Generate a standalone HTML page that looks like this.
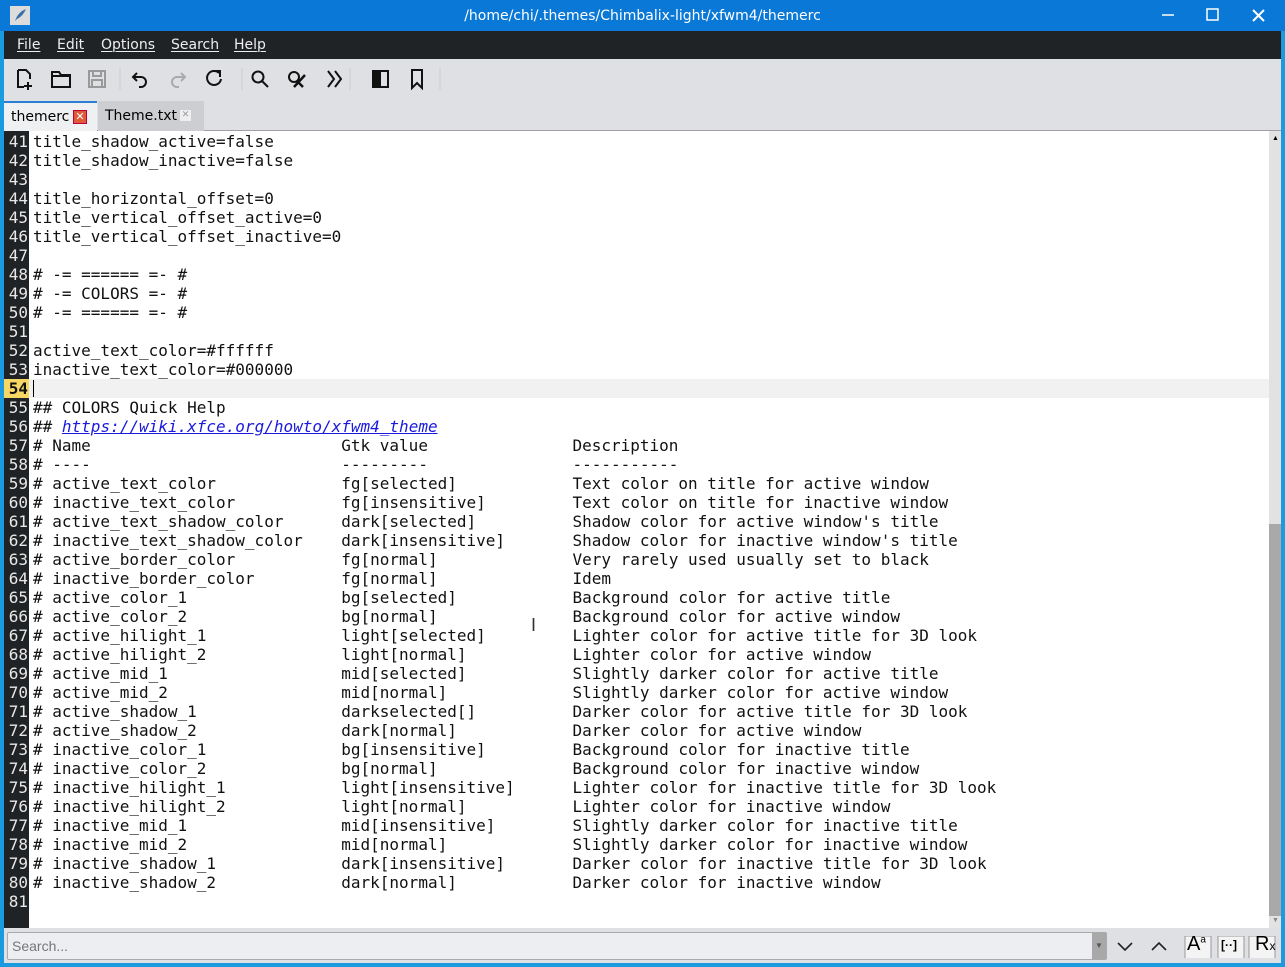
<!DOCTYPE html>
<html><head><meta charset="utf-8"><style>
*{margin:0;padding:0;box-sizing:border-box}
body{width:1285px;height:967px;background:#1a9be0;position:relative;overflow:hidden;font-family:"Liberation Sans","DejaVu Sans",sans-serif}
#title{position:absolute;left:0;top:0;width:1285px;height:31px;background:#0a78d6;color:#fff;font-size:14px;text-align:center;line-height:32px;font-family:"DejaVu Sans",sans-serif}
#menu{position:absolute;left:4px;top:31px;width:1277px;height:28px;background:#202326;color:#eee;font-size:14px;font-family:"DejaVu Sans",sans-serif}
#menu span{position:absolute;top:6px;text-decoration:underline;text-decoration-thickness:1px;text-underline-offset:2px}
#tb{position:absolute;left:4px;top:59px;width:1277px;height:40px;background:#dfe0e3}
#tabs{position:absolute;left:4px;top:99px;width:1277px;height:32px;background:#dfe0e3;border-bottom:1px solid #a0a0a0}
.tab{position:absolute;top:2px;height:30px;font-size:14px;line-height:30px;font-family:"DejaVu Sans",sans-serif}
#ed{position:absolute;left:4px;top:131px;width:1265px;height:797px;background:#fff}
#gut{position:absolute;left:4px;top:131px;width:25px;height:797px;background:#202326}
pre{font-family:"DejaVu Sans Mono",monospace;font-size:16px;line-height:19px}
#nums{position:absolute;left:4px;top:132px;width:24px;color:#e8e8e8;text-align:right}
#code{position:absolute;left:33px;top:132px;color:#111}
#sb{position:absolute;left:1269px;top:131px;width:12px;height:797px;background:#e2e2e2}
#bot{position:absolute;left:4px;top:928px;width:1277px;height:35px;background:#dfe0e3}
</style></head><body>
<div id="title"><svg style="position:absolute;left:10px;top:6px" width="20" height="19"><rect width="20" height="19" fill="#dcdcdc"/><path d="M5 15 Q8 6 16 3 Q13 10 7 13" fill="#3a6ea8"/></svg>/home/chi/.themes/Chimbalix-light/xfwm4/themerc
<svg style="position:absolute;left:1160px;top:8px" width="110" height="16" stroke="#fff" stroke-width="1.5" fill="none"><path d="M2 7H14"/><rect x="47" y="1" width="11" height="11"/><path d="M93 2L104 13M104 2L93 13" stroke-width="2"/></svg></div>
<div id="menu"><span style="left:13px">File</span><span style="left:53px">Edit</span><span style="left:97px">Options</span><span style="left:167px">Search</span><span style="left:230px">Help</span></div>
<div id="tb"><svg width="460" height="40" fill="none" stroke="#111" stroke-width="2">
<path d="M14 11h8l4 4v5M14 11v17h6M24 23v8M20 27h8"/>
<path d="M48 13h7l2 3h9v12H48z M48 17h18" />
<g stroke="#999"><rect x="85" y="12" width="16" height="16"/><rect x="89" y="12" width="8" height="5"/><rect x="88" y="21" width="10" height="7"/></g>
<path d="M116 9v22M238 9v22M346 9v22M436 9v22" stroke="#ccc" stroke-width="1"/>
<path d="M133 14l-4 4 4 4M129 18h8a5 5 0 0 1 0 10h-2"/>
<path d="M177 14l4 4-4 4M181 18h-8a5 5 0 0 0 0 10h2" stroke="#aaa"/>
<path d="M215 14a7 7 0 1 0 2 6M210 12h6v6"/>
<circle cx="254" cy="18" r="5.5"/><path d="M258 22l6 6"/>
<circle cx="290" cy="18" r="5"/><path d="M290 28l11-12M293 22l6 6" stroke-width="2.5"/>
<path d="M324 12l6 8-6 8M331 12l6 8-6 8"/>
<rect x="369" y="12" width="15" height="16"/><rect x="369" y="12" width="7" height="16" fill="#111"/>
<path d="M408 11h10v18l-5-5-5 5z"/></svg></div>
<div id="tabs">
<div class="tab" style="left:0;width:93px;background:#eef0f2;border-top:2px solid #2a7fd4;padding-left:7px;line-height:28px">themerc<span style="position:absolute;left:69px;top:7px;width:14px;height:14px;background:#e05a3a;border:1px solid #b03;color:#fff;font-size:11px;line-height:12px;text-align:center">✕</span></div>
<div class="tab" style="left:94px;width:106px;background:#cdced1;padding-left:7px">Theme.txt<span style="position:absolute;left:82px;top:9px;width:11px;height:11px;background:#eee;color:#999;font-size:9px;line-height:11px;text-align:center">✕</span></div>
</div>
<div id="ed"></div><div id="gut"></div>
<div style="position:absolute;left:29px;top:379px;width:1240px;height:19px;background:#f1f1f1"></div>
<div style="position:absolute;left:4px;top:379px;width:25px;height:19px;background:#f7d764"></div>
<div style="position:absolute;left:33px;top:380px;width:1px;height:17px;background:#000"></div>
<pre id="nums">41
42
43
44
45
46
47
48
49
50
51
52
53
<span style="color:#111;font-weight:bold">54</span>
55
56
57
58
59
60
61
62
63
64
65
66
67
68
69
70
71
72
73
74
75
76
77
78
79
80
81</pre>
<pre id="code">title_shadow_active=false
title_shadow_inactive=false

title_horizontal_offset=0
title_vertical_offset_active=0
title_vertical_offset_inactive=0

# -= ====== =- #
# -= COLORS =- #
# -= ====== =- #

active_text_color=#ffffff
inactive_text_color=#000000

## COLORS Quick Help
## <i style="color:#1a1adf;text-decoration:underline">https://wiki.xfce.org/howto/xfwm4_theme</i>
# Name                          Gtk value               Description
# ----                          ---------               -----------
# active_text_color             fg[selected]            Text color on title for active window
# inactive_text_color           fg[insensitive]         Text color on title for inactive window
# active_text_shadow_color      dark[selected]          Shadow color for active window's title
# inactive_text_shadow_color    dark[insensitive]       Shadow color for inactive window's title
# active_border_color           fg[normal]              Very rarely used usually set to black
# inactive_border_color         fg[normal]              Idem
# active_color_1                bg[selected]            Background color for active title
# active_color_2                bg[normal]              Background color for active window
# active_hilight_1              light[selected]         Lighter color for active title for 3D look
# active_hilight_2              light[normal]           Lighter color for active window
# active_mid_1                  mid[selected]           Slightly darker color for active title
# active_mid_2                  mid[normal]             Slightly darker color for active window
# active_shadow_1               darkselected[]          Darker color for active title for 3D look
# active_shadow_2               dark[normal]            Darker color for active window
# inactive_color_1              bg[insensitive]         Background color for inactive title
# inactive_color_2              bg[normal]              Background color for inactive window
# inactive_hilight_1            light[insensitive]      Lighter color for inactive title for 3D look
# inactive_hilight_2            light[normal]           Lighter color for inactive window
# inactive_mid_1                mid[insensitive]        Slightly darker color for inactive title
# inactive_mid_2                mid[normal]             Slightly darker color for inactive window
# inactive_shadow_1             dark[insensitive]       Darker color for inactive title for 3D look
# inactive_shadow_2             dark[normal]            Darker color for inactive window
</pre>
<div style="position:absolute;left:531px;top:615px;font-size:18px;color:#333">I</div>
<div id="sb"><div style="position:absolute;left:0;top:393px;width:12px;height:392px;background:#a9a9a9"></div><div style="position:absolute;left:3px;top:4px;font-size:7px">▲</div><div style="position:absolute;left:3px;top:786px;font-size:7px;color:#888">▼</div></div>
<div id="bot">
<div style="position:absolute;left:3px;top:4px;width:1100px;height:28px;background:#eceef1;border:1px solid #aaa;border-radius:2px;font-size:14px;color:#777;line-height:26px;padding-left:4px">Search...<div style="position:absolute;right:0;top:0;width:14px;height:26px;background:#a8a8a8;color:#555;font-size:8px;text-align:center;line-height:26px">▼</div></div>
<svg style="position:absolute;left:1112px;top:8px" width="160" height="22" fill="none" stroke="#222" stroke-width="1.6"><path d="M2 7l7 7 7-7M36 14l7-7 7 7"/>
<g stroke-width="1"><rect x="69" y="0" width="26" height="24" fill="#f4f4f4" stroke="#999"/><rect x="102" y="0" width="26" height="24" fill="#f4f4f4" stroke="#999"/><rect x="133" y="0" width="26" height="24" fill="#f4f4f4" stroke="#999"/></g></svg>
<div style="position:absolute;left:1183px;top:5px;font-size:20px">A<sup style="font-size:10px">a</sup></div>
<div style="position:absolute;left:1217px;top:10px;font-size:12px;font-weight:bold">[··]</div>
<div style="position:absolute;left:1251px;top:5px;font-size:20px">R<span style="font-size:12px">x</span></div>
</div>
</body></html>
